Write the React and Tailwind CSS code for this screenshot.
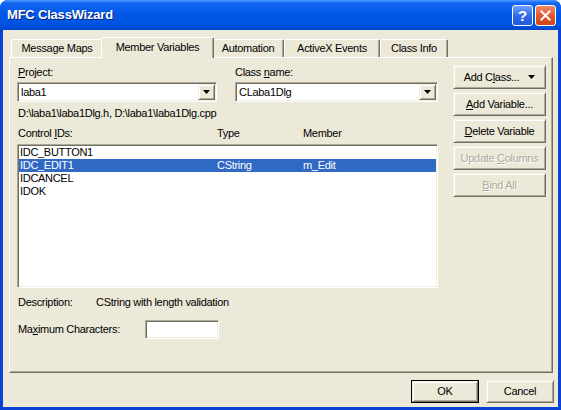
import React from 'react';

const font = "font-['Liberation_Sans',Arial,sans-serif]";

const raised =
  'border border-t-[#f1efe2] border-l-[#f1efe2] border-r-[#716f64] border-b-[#716f64] shadow-[inset_1px_1px_0_#ffffff,inset_-1px_-1px_0_#aca899]';
const sunken =
  'border border-t-[#aca899] border-l-[#aca899] border-r-white border-b-white shadow-[inset_1px_1px_0_#716f64,inset_-1px_-1px_0_#f1efe2]';

const Arrow = () => (
  <svg width="7" height="4" viewBox="0 0 7 4">
    <path d="M0 0h7L3.5 4z" fill="#000" />
  </svg>
);

const Combo = ({ value, width }) => (
  <div className={`${sunken} bg-white h-[20px] flex items-center ${width}`}>
    <span className="flex-1 pl-[3px] leading-[14px]">{value}</span>
    <div className={`${raised} bg-[#ece9d8] w-[17px] h-[16px] mr-[1px] flex items-center justify-center`}>
      <Arrow />
    </div>
  </div>
);

const SideButton = ({ children, disabled, arrow }) => (
  <div
    className={`${raised} bg-[#ece9d8] h-[24px] flex items-center justify-center gap-[9px] ${
      disabled ? 'text-[#aca899] [text-shadow:1px_1px_0_#ffffff]' : ''
    }`}
  >
    <span>{children}</span>
    {arrow && <Arrow />}
  </div>
);

const tabs = [
  { label: 'Message Maps', w: 'w-[92px]' },
  { label: 'Member Variables', w: 'w-[113px]', active: true },
  { label: 'Automation', w: 'w-[72px]' },
  { label: 'ActiveX Events', w: 'w-[96px]' },
  { label: 'Class Info', w: 'w-[68px]' },
];

const rows = [
  { id: 'IDC_BUTTON1', type: '', member: '' },
  { id: 'IDC_EDIT1', type: 'CString', member: 'm_Edit', selected: true },
  { id: 'IDCANCEL', type: '', member: '' },
  { id: 'IDOK', type: '', member: '' },
];

export default function App() {
  return (
    <div className={`${font} w-[561px] h-[410px] bg-[#0842d6] rounded-t-[8px] overflow-hidden flex flex-col text-[11px] text-black`}>
      {/* Title bar */}
      <div className="h-[30px] shrink-0 flex items-center pl-[7px] pr-[5px] bg-[linear-gradient(to_bottom,#4a9bff_0%,#1466f0_10%,#0058e8_45%,#0053df_85%,#0046c9_100%)]">
        <span className="flex-1 text-white font-bold text-[13px] tracking-[-0.2px] [text-shadow:1px_1px_0_#0a1e7a]">MFC ClassWizard</span>
        <div className="w-[21px] h-[21px] rounded-[3px] border border-white bg-[linear-gradient(to_bottom,#6aa2ff,#2f68e8_55%,#2357d8)] flex items-center justify-center text-white font-bold text-[15px] leading-none mr-[2px]">
          ?
        </div>
        <div className="w-[21px] h-[21px] rounded-[3px] border border-white bg-[linear-gradient(to_bottom,#f08a68,#e2552d_55%,#d24418)] flex items-center justify-center">
          <svg width="11" height="11" viewBox="0 0 11 11">
            <path d="M1.5 1.5l8 8M9.5 1.5l-8 8" stroke="#fff" strokeWidth="2" strokeLinecap="square" />
          </svg>
        </div>
      </div>

      {/* Body */}
      <div className="flex-1 mx-[3px] mb-[3px] bg-[#ece9d8] flex flex-col pl-[6px] tracking-[-0.3px]">
        {/* Tabs */}
        <div className="mt-[7px] h-[20px] flex items-end pl-[2px]">
          {tabs.map((t) => (
            <div
              key={t.label}
              className={`${t.w} flex items-center justify-center bg-[#ece9d8] border-t border-l border-white border-r border-r-[#716f64] rounded-t-[2px] ${
                t.active
                  ? 'relative z-10 h-[21px] -mb-px -mx-[2px] pb-[2px] shadow-[inset_-1px_0_0_#aca899]'
                  : 'h-[18px] shadow-[inset_-1px_0_0_#aca899]'
              }`}
            >
              {t.label}
            </div>
          ))}
        </div>

        {/* Panel */}
        <div className="w-[544px] h-[316px] border-t border-l border-white border-r border-b border-r-[#716f64] border-b-[#716f64] shadow-[inset_-1px_-1px_0_#aca899] pl-[7px] pt-[7px] flex">
          <div className="w-[421px] flex flex-col">
            <div className="flex gap-[18px]">
              <div className="flex flex-col">
                <span className="pl-[1px] pt-[1px] leading-[13px]">
                  <u>P</u>roject:
                </span>
                <div className="mt-[3px]">
                  <Combo value="laba1" width="w-[200px]" />
                </div>
              </div>
              <div className="flex flex-col">
                <span className="pt-[1px] leading-[13px]">
                  Class <u>n</u>ame:
                </span>
                <div className="mt-[3px]">
                  <Combo value="CLaba1Dlg" width="w-[203px]" />
                </div>
              </div>
            </div>

            <span className="mt-[5px] pl-[1px] leading-[13px]">D:\laba1\laba1Dlg.h, D:\laba1\laba1Dlg.cpp</span>

            <div className="mt-[7px] pl-[1px] grid grid-cols-[199px_86px_1fr] leading-[13px]">
              <span>
                Control <u>I</u>Ds:
              </span>
              <span>Type</span>
              <span>Member</span>
            </div>

            <div className={`${sunken} mt-[4px] h-[144px] bg-white py-[1px] px-[1px]`}>
              {rows.map((r) => (
                <div
                  key={r.id}
                  className={`h-[13px] leading-[13px] pl-[1px] grid grid-cols-[197px_86px_1fr] ${
                    r.selected ? 'bg-[#316ac5] text-white' : ''
                  }`}
                >
                  <span>{r.id}</span>
                  <span>{r.type}</span>
                  <span>{r.member}</span>
                </div>
              ))}
            </div>

            <div className="mt-[8px] pl-[1px] flex leading-[13px]">
              <span className="w-[78px]">Description:</span>
              <span>CString with length validation</span>
            </div>

            <div className="mt-[11px] pl-[1px] flex items-center">
              <span className="w-[127px]">
                Ma<u>x</u>imum Characters:
              </span>
              <div className={`${sunken} bg-white w-[74px] h-[19px]`} />
            </div>
          </div>

          <div className="ml-[15px] w-[93px] flex flex-col gap-[3px]">
            <SideButton arrow>
              Add C<u>l</u>ass...
            </SideButton>
            <SideButton>
              <u>A</u>dd Variable...
            </SideButton>
            <SideButton>
              <u>D</u>elete Variable
            </SideButton>
            <SideButton disabled>
              Update <u>C</u>olumns
            </SideButton>
            <SideButton disabled>
              <u>B</u>ind All
            </SideButton>
          </div>
        </div>

        {/* Bottom buttons */}
        <div className="mt-[7px] flex justify-end gap-[7px] pr-[4px]">
          <div className="border border-black w-[68px] h-[23px] flex">
            <div className={`${raised} flex-1 bg-[#ece9d8] flex items-center justify-center`}>OK</div>
          </div>
          <div className={`${raised} w-[68px] h-[23px] bg-[#ece9d8] flex items-center justify-center`}>Cancel</div>
        </div>
      </div>
    </div>
  );
}
